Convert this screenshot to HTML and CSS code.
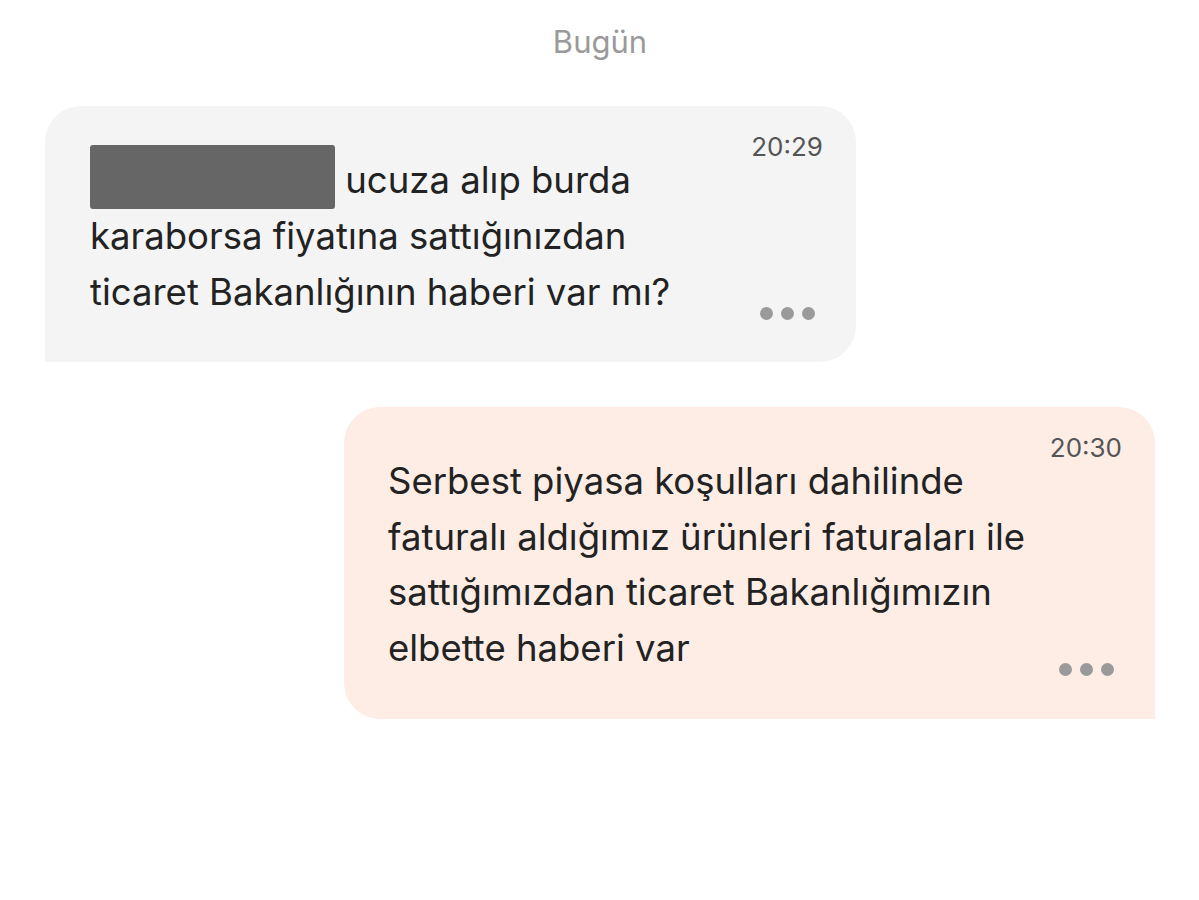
FILE: index.html
```html
<!DOCTYPE html>
<html lang="tr">
<head>
<meta charset="utf-8">
<link rel="stylesheet" href="styles.css">
</head>
<body>
<main class="chat">
  <div class="day">Bugün</div>
  <div class="bubble in">
    <p class="text"><span class="redact"></span> ucuza alıp burda karaborsa fiyatına sattığınızdan ticaret Bakanlığının haberi var mı?</p>
    <div class="meta">
      <span class="time">20:29</span>
      <span class="dots"><i></i><i></i><i></i></span>
    </div>
  </div>
  <div class="bubble out">
    <p class="text">Serbest piyasa koşulları dahilinde faturalı aldığımız ürünleri faturaları ile sattığımızdan ticaret Bakanlığımızın elbette haberi var</p>
    <div class="meta">
      <span class="time">20:30</span>
      <span class="dots"><i></i><i></i><i></i></span>
    </div>
  </div>
</main>
</body>
</html>
```

FILE: styles.css
```css
html, body {
  margin: 0;
  padding: 0;
  background: #ffffff;
}
body {
  font-family: Inter, "Noto Sans", "Liberation Sans", sans-serif;
  color: #222222;
}
.chat {
  display: flex;
  flex-direction: column;
  padding: 0 44px 0 45px;
}
.day {
  align-self: center;
  font-size: 31px;
  line-height: 40px;
  color: #9a9a9a;
  padding-top: 22px;
  margin-bottom: 44px;
}
.bubble {
  display: flex;
  justify-content: space-between;
  width: 811px;
  box-sizing: border-box;
}
.bubble.in {
  align-self: flex-start;
  background: #f4f4f4;
  border-radius: 36px 36px 36px 0;
  padding: 44px 33px 42px 45px;
}
.bubble.out {
  align-self: flex-end;
  background: #fdede5;
  border-radius: 36px 36px 0 36px;
  padding: 44px 33px 43px 44px;
  margin-top: 45px;
}
.text {
  margin: 0;
  padding-top: 3px;
  width: 645px;
  font-size: 36.5px;
  line-height: 55.5px;
}
.redact {
  display: inline-block;
  width: 245px;
  height: 64px;
  background: #666666;
  border-radius: 3px;
  vertical-align: -16px;
  margin-top: -20px;
  margin-bottom: 0;
}
.meta {
  display: flex;
  flex-direction: column;
  justify-content: space-between;
  align-items: flex-end;
  margin-top: -19px;
  margin-bottom: 0;
}
.time {
  font-size: 26px;
  line-height: 32px;
  color: #555555;
}
.dots {
  display: flex;
  gap: 8px;
  margin-right: 8px;
}
.dots i {
  width: 13px;
  height: 13px;
  border-radius: 50%;
  background: #9a9a9a;
}
```
